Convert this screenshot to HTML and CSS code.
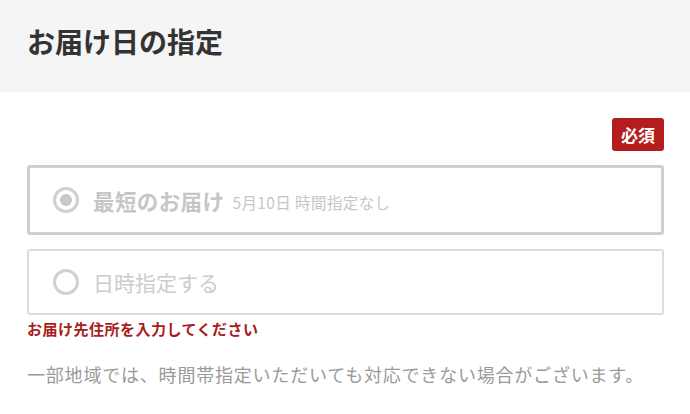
FILE: index.html
```html
<!DOCTYPE html>
<html lang="ja">
<head>
<meta charset="utf-8">
<link rel="stylesheet" href="styles.css">
</head>
<body>
<header class="hd"><h1 class="title">お届け日の指定</h1></header>
<main class="content">
  <div class="req-row"><span class="badge">必須</span></div>
  <label class="option option-selected">
    <span class="radio radio-on"></span>
    <span class="opt-main">最短のお届け</span>
    <span class="opt-sub">5月10日 時間指定なし</span>
  </label>
  <label class="option option-plain">
    <span class="radio"></span>
    <span class="opt-label">日時指定する</span>
  </label>
  <p class="error">お届け先住所を入力してください</p>
  <p class="note">一部地域では、時間帯指定いただいても対応できない場合がございます。</p>
</main>
</body>
</html>
```
FILE: styles.css
```css
* { box-sizing: border-box; }
html, body { margin: 0; padding: 0; background: #fff; }
body {
  font-family: "Noto Sans CJK JP", "Noto Sans", sans-serif;
  width: 690px;
  height: 414px;
  overflow: hidden;
}
.hd {
  height: 92px;
  background: #f5f5f5;
  padding: 27px 27px 0;
}
.title {
  margin: 0;
  font-size: 28px;
  line-height: 28px;
  font-weight: 700;
  color: #333;
}
.content {
  padding: 26px 26px 0 27px;
}
.req-row {
  display: flex;
  justify-content: flex-end;
}
.badge {
  display: flex;
  align-items: center;
  justify-content: center;
  width: 52px;
  height: 33px;
  background: #b31d1d;
  color: #fff;
  border-radius: 3px;
  font-size: 17px;
  font-weight: 700;
}
.option {
  display: flex;
  align-items: center;
  margin-top: 14px;
  border-radius: 3px;
  padding-left: 23px;
}
.option-selected {
  height: 70px;
  border: 3px solid #cfcfcf;
}
.option-plain {
  height: 66px;
  border: 2px solid #dcdcdc;
  padding-left: 24px;
}
.radio {
  width: 26px;
  height: 26px;
  border-radius: 50%;
  border: 3px solid #d0d0d0;
  display: flex;
  align-items: center;
  justify-content: center;
  flex: none;
  margin-right: 14px;
}
.radio-on::after {
  content: "";
  width: 12px;
  height: 12px;
  border-radius: 50%;
  background: #c8c8c8;
}
.opt-main {
  font-size: 21.5px;
  font-weight: 700;
  color: #c6c6c6;
  letter-spacing: 0.4px;
}
.opt-sub {
  font-size: 15.5px;
  color: #c6c6c6;
  margin-left: 8px;
  padding-top: 4px;
  letter-spacing: 0.4px;
}
.opt-label {
  font-size: 21px;
  color: #cccccc;
}
.error {
  margin: 4px 0 0;
  font-size: 15px;
  line-height: 20px;
  font-weight: 700;
  color: #a81c1c;
  letter-spacing: 0.5px;
}
.note {
  margin: 22px 0 0;
  font-size: 18px;
  line-height: 26px;
  color: #9a9a9a;
  letter-spacing: 0.8px;
  white-space: nowrap;
}
```
